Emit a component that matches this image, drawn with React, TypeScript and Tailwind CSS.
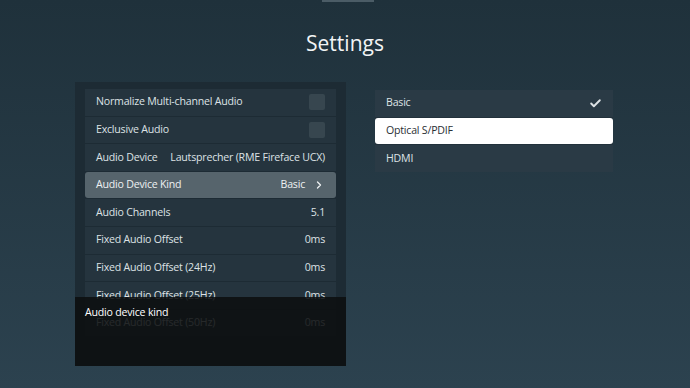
import { Check, ChevronRight } from 'lucide-react'

type Row = {
  label: string
  value?: string
  toggle?: boolean
  chevron?: boolean
  active?: boolean
}

const ROWS: Row[] = [
  { label: 'Normalize Multi-channel Audio', toggle: true },
  { label: 'Exclusive Audio', toggle: true },
  { label: 'Audio Device', value: 'Lautsprecher (RME Fireface UCX)' },
  { label: 'Audio Device Kind', value: 'Basic', chevron: true, active: true },
  { label: 'Audio Channels', value: '5.1' },
  { label: 'Fixed Audio Offset', value: '0ms' },
  { label: 'Fixed Audio Offset (24Hz)', value: '0ms' },
  { label: 'Fixed Audio Offset (25Hz)', value: '0ms' },
  { label: 'Fixed Audio Offset (50Hz)', value: '0ms' },
]

const OPTIONS = [
  { label: 'Basic', checked: true },
  { label: 'Optical S/PDIF', focused: true },
  { label: 'HDMI' },
]

function SettingRow({ row }: { row: Row }) {
  return (
    <div
      className={`flex h-[26.6px] shrink-0 items-center justify-between gap-2 px-[11px] text-[10.6px] tracking-[-0.02em] ${
        row.active ? 'rounded-[3px] bg-[#56646c] text-[#eef1f2]' : 'bg-[#25343e] text-[#dde2e5]'
      }`}
    >
      <span className="whitespace-nowrap">{row.label}</span>
      {row.toggle && <span className="h-[16px] w-[16px] rounded-[2px] bg-[#37464f]" />}
      {row.value && (
        <span className="flex items-center gap-[8px] whitespace-nowrap">
          {row.value}
          {row.chevron && <ChevronRight className="h-[12px] w-[12px]" strokeWidth={2.6} />}
        </span>
      )}
    </div>
  )
}

export default function App() {
  return (
    <div
      className="relative flex h-[388px] w-[690px] flex-col overflow-hidden bg-[#263a46] bg-gradient-to-b from-[#1f313b] to-[#2c424f] text-white"
      style={{ fontFamily: '"Open Sans", "Noto Sans", sans-serif' }}
    >
      <div className="absolute left-[322px] top-0 h-[2px] w-[52px] bg-[#4b5c66]" />

      <h1 className="mt-[27px] text-center text-[21px] font-normal leading-[32px] text-[#f2f4f5]">Settings</h1>

      <div className="mt-[23px] flex gap-[29px] pl-[75px]">
        <div className="relative flex h-[284px] w-[271px] flex-col gap-px overflow-hidden bg-[#1d2b34] px-[10px] pt-[7px]">
          {ROWS.map((row) => (
            <SettingRow key={row.label} row={row} />
          ))}
          <div className="absolute inset-x-0 bottom-0 h-[69px] bg-[#0c0f10]/[0.88] px-[10px] pt-[8px] text-[10.6px] tracking-[-0.02em] text-white">
            Audio device kind
          </div>
        </div>

        <div className="mt-[8px] flex w-[238px] flex-col gap-px self-start bg-[#22313b]">
          {OPTIONS.map((opt) => (
            <div
              key={opt.label}
              className={`flex h-[26.6px] items-center justify-between px-[11px] text-[10.6px] tracking-[-0.02em] ${
                opt.focused ? 'rounded-[3px] bg-white text-[#2a2f33]' : 'bg-[#2a3a45] text-[#dde2e5]'
              }`}
            >
              <span>{opt.label}</span>
              {opt.checked && <Check className="h-[13px] w-[13px]" strokeWidth={3.5} />}
            </div>
          ))}
        </div>
      </div>
    </div>
  )
}
